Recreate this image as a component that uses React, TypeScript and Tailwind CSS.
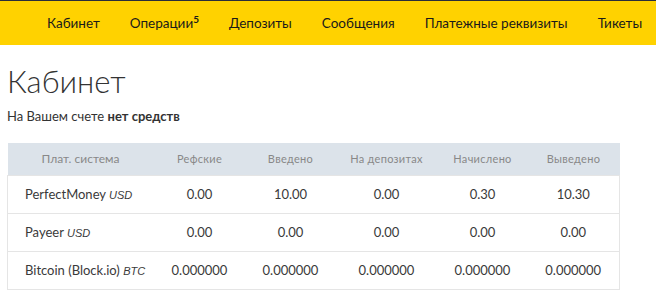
import React from 'react';

const navItems = ['Кабинет', 'Операции', 'Депозиты', 'Сообщения', 'Платежные реквизиты', 'Тикеты'];

const columns = [
  { title: 'Плат. система', width: 'w-[146px]' },
  { title: 'Рефские', width: 'w-[92px]' },
  { title: 'Введено', width: 'w-[90px]' },
  { title: 'На депозитах', width: 'w-[102px]' },
  { title: 'Начислено', width: 'w-[90px]' },
  { title: 'Выведено', width: 'w-[92px]' },
];

const rows = [
  { name: 'PerfectMoney', cur: 'USD', values: ['0.00', '10.00', '0.00', '0.30', '10.30'] },
  { name: 'Payeer', cur: 'USD', values: ['0.00', '0.00', '0.00', '0.00', '0.00'] },
  { name: 'Bitcoin (Block.io)', cur: 'BTC', values: ['0.000000', '0.000000', '0.000000', '0.000000', '0.000000'] },
];

export default function App() {
  return (
    <div className="min-h-[305px] bg-white font-['Lato',sans-serif] text-[#333]">
      <nav className="flex h-[45px] items-center gap-[30px] border-t border-[#2a2d3a] bg-[#ffd200] pl-[47px] text-[13.5px] text-[#1a1a1a]">
        {navItems.map((item) => (
          <span key={item} className="whitespace-nowrap">
            {item}
            {item === 'Операции' && <sup className="text-[10px] font-bold">5</sup>}
          </span>
        ))}
      </nav>

      <div className="px-[7px]">
        <h1 className="mt-[16px] text-[31px] font-light leading-[40px] text-[#333]">Кабинет</h1>
        <p className="mt-[6px] text-[13px]">
          На Вашем счете <b className="font-bold">нет средств</b>
        </p>

        <table className="mt-[16px] w-[612px] table-fixed border-collapse text-[13px] text-[#3a3a3a]">
          <thead>
            <tr className="h-[33px] bg-[#dce3ea] text-[#888]">
              {columns.map((col, i) => (
                <th
                  key={col.title}
                  className={`${col.width} font-normal ${i === 0 ? 'text-[12px]' : 'text-[11px] tracking-[0.3px]'}`}
                >
                  {col.title}
                </th>
              ))}
            </tr>
          </thead>
          <tbody>
            {rows.map((row) => (
              <tr key={row.name} className="h-[38px] border border-[#e5e5e5]">
                <td className="pl-[17px] whitespace-nowrap">
                  {row.name}{' '}
                  <i className="font-['Liberation_Sans',sans-serif] text-[11px] italic">{row.cur}</i>
                </td>
                {row.values.map((v, i) => (
                  <td key={i} className="text-center">
                    {v}
                  </td>
                ))}
              </tr>
            ))}
          </tbody>
        </table>
      </div>
    </div>
  );
}
